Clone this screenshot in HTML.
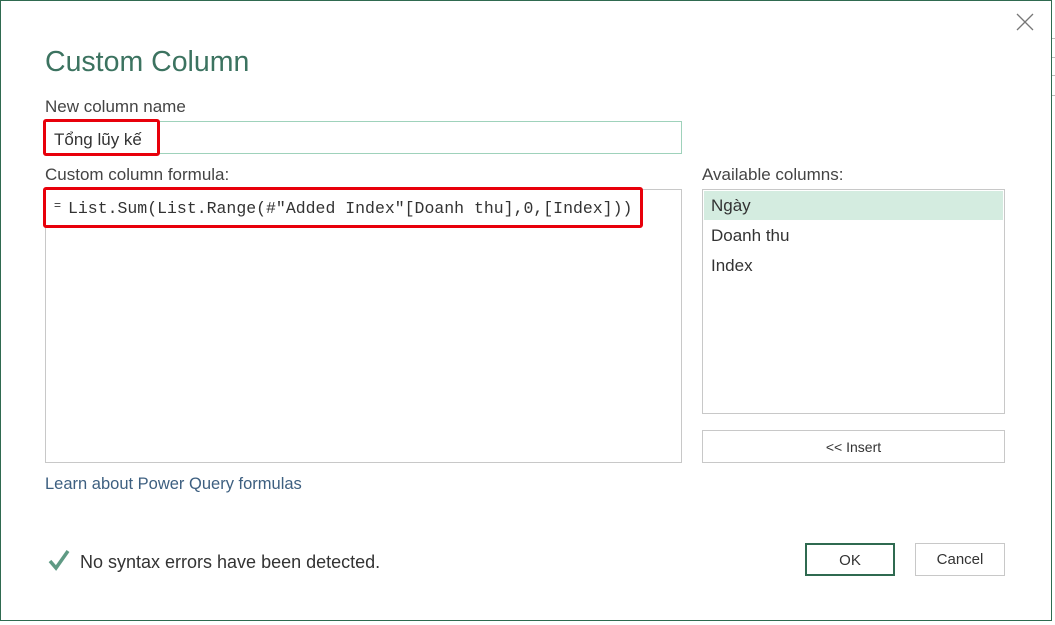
<!DOCTYPE html>
<html><head><meta charset="utf-8"><style>
*{margin:0;padding:0;box-sizing:border-box}
body{width:1055px;height:625px;background:#fff;position:relative;overflow:hidden;font-family:"Liberation Sans","DejaVu Sans",sans-serif;color:#333}
.dlg{position:absolute;left:0;top:0;width:1052px;height:621px;border:1.5px solid #2f6a50;background:#fff}
.a{position:absolute;white-space:nowrap}
.box{position:absolute;border:1.5px solid #c8c8c8;background:#fff}
.red{position:absolute;border:3px solid #e8000b;border-radius:3px}
</style></head><body>
<div class="a" style="left:1052px;top:38px;width:3px;height:1px;background:#bbb"></div>
<div class="a" style="left:1052px;top:57px;width:3px;height:1px;background:#bbb"></div>
<div class="a" style="left:1052px;top:75px;width:3px;height:1px;background:#bbb"></div>
<div class="a" style="left:1052px;top:95px;width:3px;height:1px;background:#bbb"></div>
<div class="dlg"></div>
<svg class="a" style="left:1015px;top:12px" width="20" height="20"><path d="M2 2L18 18M18 2L2 18" stroke="#777" stroke-width="1.3"/></svg>
<div class="a" style="left:45px;top:46px;font-size:28.5px;color:#3c7360">Custom Column</div>
<div class="a" style="left:45px;top:97px;font-size:17px;color:#444">New column name</div>
<div class="box" style="left:45px;top:121px;width:637px;height:33px;border:1.5px solid #9fd2bb"></div>
<div class="a" style="left:54px;top:130px;font-size:17px;color:#333">Tổng lũy kế</div>
<div class="red" style="left:43px;top:119px;width:117px;height:37px"></div>
<div class="a" style="left:45px;top:165px;font-size:17px;color:#444">Custom column formula:</div>
<div class="box" style="left:45px;top:189px;width:637px;height:274px"></div>
<div class="a" style="left:54px;top:198px;font-size:12px;color:#333">=</div>
<div class="a" style="left:68px;top:199px;font-size:16.5px;font-family:'Liberation Mono','DejaVu Sans Mono',monospace;color:#333">List.Sum(List.Range(#"Added Index"[Doanh thu],0,[Index]))</div>
<div class="red" style="left:43px;top:187px;width:600px;height:41px"></div>
<div class="a" style="left:702px;top:165px;font-size:17px;color:#444">Available columns:</div>
<div class="box" style="left:702px;top:189px;width:303px;height:225px"></div>
<div class="a" style="left:704px;top:191px;width:299px;height:29px;background:#d4ece0"></div>
<div class="a" style="left:711px;top:196px;font-size:17px">Ngày</div>
<div class="a" style="left:711px;top:226px;font-size:17px">Doanh thu</div>
<div class="a" style="left:711px;top:256px;font-size:17px">Index</div>
<div class="box" style="left:702px;top:430px;width:303px;height:33px;text-align:center;font-size:14px;line-height:33px">&lt;&lt; Insert</div>
<div class="a" style="left:45px;top:475px;font-size:16.5px;color:#3d5f80">Learn about Power Query formulas</div>
<svg class="a" style="left:48px;top:549px" width="22" height="22"><path d="M2 12L8 19L20 2" stroke="#5f9a84" stroke-width="3.5" fill="none"/></svg>
<div class="a" style="left:80px;top:552px;font-size:18px;color:#333">No syntax errors have been detected.</div>
<div class="box" style="left:805px;top:543px;width:90px;height:33px;border:2px solid #2f6a50;text-align:center;font-size:15px;line-height:31px">OK</div>
<div class="box" style="left:915px;top:543px;width:90px;height:33px;text-align:center;font-size:15px;line-height:32px">Cancel</div>
</body></html>
